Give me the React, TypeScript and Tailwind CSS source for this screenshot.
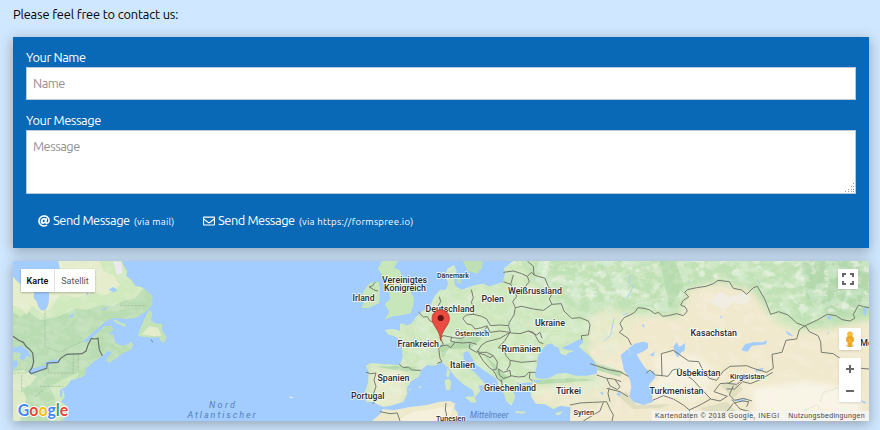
import React from "react";
import { FaAt, FaRegEnvelope } from "react-icons/fa";

type Label = { t: string; x: number; y: number; w: number; s?: number };

// Country labels, positioned on the map canvas
const labels: Label[] = [
  { t: "Vereinigtes", x: 382, y: 282.5, w: 45 },
  { t: "Königreich", x: 384, y: 291, w: 42 },
  { t: "Irland", x: 352.5, y: 300.5, w: 22 },
  { t: "Dänemark", x: 437, y: 277.5, w: 32, s: 7 },
  { t: "Deutschland", x: 425.5, y: 311.5, w: 49 },
  { t: "Polen", x: 481.5, y: 302, w: 22.5 },
  { t: "Weißrussland", x: 508, y: 294, w: 54 },
  { t: "Ukraine", x: 535, y: 325.5, w: 30 },
  { t: "Österreich", x: 455, y: 335.5, w: 34, s: 7 },
  { t: "Frankreich", x: 397.5, y: 347, w: 41.5 },
  { t: "Rumänien", x: 501.5, y: 352, w: 39.5 },
  { t: "Italien", x: 450, y: 368, w: 25 },
  { t: "Spanien", x: 377.5, y: 381, w: 32 },
  { t: "Portugal", x: 351, y: 399, w: 33.5 },
  { t: "Griechenland", x: 484, y: 391, w: 52 },
  { t: "Türkei", x: 556, y: 394, w: 25 },
  { t: "Syrien", x: 573.5, y: 414.5, w: 20.5, s: 7 },
  { t: "Tunesien", x: 436, y: 420.8, w: 29.5, s: 7 },
  { t: "Kasachstan", x: 690.5, y: 335.5, w: 46.5 },
  { t: "Usbekistan", x: 676.5, y: 375.5, w: 44 },
  { t: "Turkmenistan", x: 649.5, y: 394, w: 54 },
  { t: "Kirgisistan", x: 730, y: 378.5, w: 34.5, s: 7 },
  { t: "Mongolei", x: 860, y: 345.5, w: 38 },
];

const westLand =
  "M39 65L50 78L62 88V112L102 110L100 128L110 140L116 158L126 168L140 162L146 145L148 112L178 92L182 50L175 18H365L370 30L382 50L378 62L395 76L405 92L430 98L445 112L458 124L456 150L440 168L408 188L380 192L345 188L318 198L302 212L270 240L246 262L262 260L290 236L312 214L334 212L342 224L326 236L340 240L345 262L366 272L384 268L392 260L400 268L392 284L370 294L345 312L328 325L318 316L326 302L338 290L322 288L305 305L280 320L258 342L258 358L240 368L212 376L198 396L188 400L194 425L183 440L204 455L204 476L190 498H39Z";
const mainland =
  "M135 225L158 222L180 228V206L194 206L198 212L214 206L228 186L248 168L270 152L284 124L300 104L318 104L324 86L318 60L322 42L342 30L350 48L342 70L345 92L366 104L398 92L430 86L448 94L488 82L495 58L492 40L520 18H1587V498H690L692 456L660 452L640 462L615 448L588 446L574 426L570 402L578 382L548 384L530 382L538 394L512 392L526 426L514 452L498 438L492 416L476 398L470 372L438 350L410 330L394 306L384 288L370 294L372 322L394 344L414 362L436 386L430 392L416 390L420 408L404 430L398 406L370 388L346 366L326 340L306 322L284 332L262 330L242 346L238 364L212 380L200 400L202 418L190 440L160 450L130 456L112 448L100 440L78 442L74 414L84 382L86 350L78 332L92 324L140 328L180 330L188 306L186 280L186 258L164 244L144 238Z";

const roads = [
  "M530 90L556 120L550 180M620 105L642 170M740 120L780 170L775 240M780 60L800 170L850 100L900 70M780 170L850 210L870 300M850 180L880 150L970 130L1050 160M1010 300L1080 350M420 110L450 180L550 200M220 210L240 280L290 300M240 280L215 320M135 350L155 400L180 420M340 150L390 180M600 240L690 230L780 200M820 220L770 290L770 340",
];

const borders = [
  // Iberia and France
  "M78 352L92 356L108 354L102 375L108 395L100 418L104 440L98 446M178 328L190 338L205 336L215 345L242 346",
  "M236 172L250 186L262 185L270 198L300 210M298 125L302 140L294 154M300 246L310 268L296 280L300 310L306 320L292 325M300 274L320 270L332 278L345 262L370 264L390 262L410 268",
  "M300 246L312 242L325 245L335 246L332 258L345 262M335 248L365 250L382 240L405 232L430 232L442 214",
  // Central Europe
  "M394 104L400 128L394 142L402 160L400 178L380 180L368 190L380 206L395 210L405 222L425 218L442 212",
  "M400 178L425 184L440 192L452 212L480 210L506 212M442 214L450 232L480 228L510 232M390 265L388 280L410 292L425 270L440 260L480 250L510 232",
  "M410 292L418 288M415 292L440 292L460 302L450 308L435 300L415 294L430 318L450 340L458 344M460 302L472 320L470 342L458 345L466 356L472 370L485 380",
  "M476 342L490 352L510 346L512 364L490 370L478 360L476 342M512 362L535 366L555 364L566 352L586 352M484 374L488 398M570 352L568 370L578 378",
  "M510 232L495 256L475 278L492 282L498 302L510 316L510 330L500 346M510 316L545 322L590 318M506 214L512 234L540 236L565 228L580 232L598 262L610 266M565 228L590 240L600 232L606 250",
  // Eastern Europe
  "M490 52L520 48L545 56L562 64L575 52L582 60L580 34L562 18M490 80L512 88L524 108L530 124L518 140L526 158L522 180L508 202L506 212M520 60L512 88M562 64L568 80L548 104L524 108M582 60L615 70L625 95L638 112L628 132L636 148",
  "M526 158L545 154L580 162L610 166L636 148L664 146L672 168L695 190L720 188L745 198L750 210L745 240L724 242L726 255",
  // Caucasus, Turkey and the Levant
  "M750 326L780 336L810 345L840 350L865 364M770 360L800 370L820 372L844 380M800 370L810 392L832 404L840 395L825 374M690 450L720 444L760 442L800 440L810 462L820 480L816 498M810 440L804 415L808 398M730 498L780 468L790 442M800 400L840 410L864 425",
  // Kazakhstan
  "M874 270L864 250L838 232L848 222L840 205L852 188L870 180L884 172L894 158L912 160L928 164L944 176L956 172L968 184L985 182L1010 176L1030 182L1042 168L1036 156L1022 150L1030 136L1046 126L1034 112L1042 104L1070 98L1098 94L1120 86L1134 76L1168 80L1180 100L1205 105L1220 118L1240 98L1252 94L1274 132L1292 178L1316 170L1344 180L1370 204L1396 214",
  "M1396 212L1378 224L1370 252L1338 256L1326 292L1296 298L1300 340L1280 352L1240 340L1220 332L1170 334L1150 348L1130 376L1108 370L1090 348L1076 320L1046 318L1020 300L1000 286L964 296L966 362L946 360L930 345L918 355",
  "M966 362L984 364L998 345L1020 340L1038 360L1058 374L1086 404L1112 432M938 436L970 422L1000 432L1030 450L1048 465M1048 465L1080 450L1112 432L1140 438L1162 424L1122 410L1140 386L1166 384L1200 366M1180 392L1168 420L1184 436L1210 430L1236 438M1162 385L1190 388L1210 374M1160 402L1184 402L1208 380L1232 386L1260 374L1298 352M1176 434L1200 462L1230 470L1244 498M1048 465L1050 498M1180 445L1160 470L1110 498M1182 444L1208 438L1226 440L1220 455",
  // Mongolia
  "M1396 212L1430 196L1462 178L1488 182L1506 194L1530 198L1544 190L1540 178L1556 150L1570 155L1587 158M1396 212L1408 230L1434 242L1442 260L1444 292L1480 296L1500 310L1540 338L1587 342",
  // Africa and Ireland
  "M120 470L150 476L172 474L180 498M318 444L316 465L320 480L310 498M105 82L98 92L88 96L105 106L114 108",
];

function MapCanvas() {
  return (
    <svg className="block h-full w-full" viewBox="13 261 856 160" fontFamily="Roboto, sans-serif">
      <defs>
        <clipPath id="west">
          <path d={westLand} />
        </clipPath>
        <clipPath id="east">
          <path d={mainland} />
        </clipPath>
        <clipPath id="northAsia">
          <path d="M500 18H1587V150L1540 165L1480 178L1400 205L1330 175L1290 165L1250 90L1140 72L1110 88L1040 100L1020 150L1000 175L890 155L800 140L650 120Z" />
        </clipPath>
        <filter id="forest" x="0" y="0" width="100%" height="100%">
          <feTurbulence type="fractalNoise" baseFrequency="0.022 0.03" numOctaves="5" seed="8" />
          <feColorMatrix values="0 0 0 0 .71  0 0 0 0 .86  0 0 0 0 .69  7 0 0 0 -3.3" />
        </filter>
        <filter id="meadow" x="0" y="0" width="100%" height="100%">
          <feTurbulence type="fractalNoise" baseFrequency="0.03 0.04" numOctaves="5" seed="4" />
          <feColorMatrix values="0 0 0 0 .84  0 0 0 0 .92  0 0 0 0 .78  7 0 0 0 -3.9" />
        </filter>
        <filter id="steppe" x="0" y="0" width="100%" height="100%">
          <feTurbulence type="fractalNoise" baseFrequency="0.025 0.035" numOctaves="4" seed="21" />
          <feColorMatrix values="0 0 0 0 .96  0 0 0 0 .94  0 0 0 0 .84  0 7 0 0 -3.4" />
        </filter>
        <filter id="soft" x="-10%" y="-10%" width="120%" height="120%">
          <feGaussianBlur stdDeviation="10" />
        </filter>
      </defs>
      <rect x="13" y="261" width="856" height="160" fill="#a3ccff" />

      {/* North America */}
      <g transform="translate(0 255) scale(.33333)">
        <path d={westLand} fill="#b9dcb2" />
        <g clipPath="url(#west)">
          <path d="M39 60V172L60 185L85 170L120 195L148 190L170 185L200 175L230 160L260 165L300 150L340 152L370 138L405 130L430 100L365 18H170Z" fill="#d0e9bd" />
          <path d="M39 60V150L62 158L80 178L96 152L130 176L160 150L180 118L230 128L280 112L320 120L360 90L340 60L310 48L300 18H170Z" fill="#e5edcc" />
          <path d="M39 350L70 345L110 365L90 390L65 400L80 430L60 498H39Z" fill="#dceac5" />
          <path d="M150 395L185 375L240 350L220 385L190 400L205 440L180 498H150L168 440Z" fill="#cfe8bc" />
          <rect x="39" y="150" width="420" height="350" filter="url(#forest)" opacity=".2" />
          <rect x="39" y="18" width="420" height="480" filter="url(#steppe)" opacity=".14" />
          <path d="M340 18L364 22L368 55L350 60Z" fill="#eceaf0" />
          <g fill="#a3ccff">
            <path d="M39 278L62 272L82 284L92 305L80 302L70 318L58 310L64 294L39 292ZM82 348L100 340L140 330L136 342L94 360ZM130 325L155 314L180 314L176 324L140 330ZM39 318L50 315L54 330L39 345Z" />
            <path d="M326 104L340 96L352 106L342 112ZM205 188L218 176L224 170L218 186ZM258 120L262 112L266 118ZM300 165L325 155L315 164ZM180 405L188 398L186 430L180 422Z" />
          </g>
          <path d="M135 162V275L180 292L210 276L246 260M360 152H440M120 394H190M145 325V354H220V298M235 298V345M65 360V415M40 355L80 353M105 425L130 405" fill="none" stroke="#91ac95" strokeDasharray="8 3" strokeWidth="1.5" />
        </g>
        <path d="M448 164L458 174L452 196L470 206L488 206L485 224L500 246L492 264L480 256L478 246L460 248L414 244L420 222L430 200L440 178Z" fill="#c3e2b7" />
        <path d="M425 238L448 214L474 218L484 242L460 244Z" fill="#e3edcb" />
        <path d="M342 192L360 202L378 208L376 216L356 208L340 198ZM340 262L355 272L370 275L362 280L344 272Z" fill="#c8e5bb" />
        <path d="M39 244L56 256L70 262L78 274L90 284L98 294L101 320L96 338L88 350L94 356L116 348L140 340L142 324L174 322L182 310L200 298L246 296L258 288L264 270L274 250L284 252L294 250L298 284L307 302" fill="none" stroke="#64716a" strokeWidth="3.6" />
        <path d="M453 254L459 262" stroke="#50606c" strokeWidth="2" />
      </g>

      {/* Europe, Asia and North Africa */}
      <g transform="translate(340 255) scale(.33333)">
        <path d={mainland} fill="#cee7bd" />
        <path d="M125 18H174L162 38L180 46L186 72L204 98L222 128L220 152L212 174L188 180L160 184L134 194L148 170L134 148L150 132L148 106L132 92L136 72L114 42ZM90 84L116 80L120 105L118 144L88 158L64 160L70 144L60 132L72 106Z" fill="#c7e6ba" />
        <path d="M368 18H428L426 40L410 56L384 48ZM354 66L364 72L362 88L350 82Z" fill="#bfdfb4" />
        <g clipPath="url(#east)">
          <g filter="url(#soft)">
            <path d="M520 0H1600V260L1490 230L1400 215L1300 160L1150 85L1040 105L1010 180L880 160L790 220L630 120Z" fill="#c0e1b5" />
            <path d="M830 185L1020 185L1050 100L1140 82L1240 110L1290 190L1370 230L1490 215L1610 190V520H650L670 420L780 400L740 280L790 240Z" fill="#f1e9ce" />
            <path d="M740 190L800 160L890 180L850 270L750 270Z" fill="#e7eac9" />
            <path d="M90 345L200 345L190 450H95Z" fill="#e9ebcc" />
            <path d="M575 395L820 380V460H575Z" fill="#ebe9cb" />
            <path d="M1070 300L940 300L960 350L930 440L1080 430L1130 350Z" fill="#f5f0df" />
            <path d="M1230 400L1400 380L1560 400L1560 480L1250 480Z" fill="#f8f4e6" />
            <path d="M1370 15H1600V170L1480 170L1400 145Z" fill="#b2d8ac" />
          </g>
          <rect x="100" y="18" width="740" height="400" filter="url(#forest)" opacity=".4" />
          <g clipPath="url(#northAsia)">
            <rect x="500" y="18" width="1087" height="200" filter="url(#forest)" opacity=".5" />
            <rect x="500" y="18" width="1087" height="200" filter="url(#meadow)" opacity=".6" />
          </g>
          <path d="M960 18L1005 18L1032 90L990 160L976 100Z" fill="#b0d8aa" opacity=".75" />
          <path d="M345 255L395 240L425 250L395 280L325 282L308 310L300 280ZM735 285L770 325L850 350L840 365L770 345ZM580 376L680 370L770 375L690 382L590 388ZM180 332L230 338L200 350L110 335ZM435 300L475 340L505 370L485 380Z" fill="#a5d1a1" opacity=".65" />
          <rect x="75" y="18" width="1520" height="480" filter="url(#steppe)" opacity=".16" />
          <path d="M1140 110L1170 125L1210 112L1235 130L1215 150L1180 142L1150 165L1110 140Z" fill="#f0ede6" opacity=".8" />
          <path d="M830 420L860 410L890 450L990 448L960 460L880 462ZM1140 390L1175 380L1210 400L1180 430ZM1080 460L1160 440L1190 470L1130 490Z" fill="#d7d8ba" opacity=".7" />
        </g>
        <path d="M95 498L120 478L128 462L160 466L210 456L260 450L300 440L330 438L346 446L342 460L354 474L350 498Z" fill="#edeacc" />
        <path d="M170 498L220 470L300 458L336 455L330 498Z" fill="#f5f0db" />
        <path d="M314 374L328 372L334 382L330 406L318 404ZM322 340L330 348L326 368L318 362ZM374 426L402 424L410 440L396 444ZM525 468L560 470L550 476L528 474ZM646 474L668 468L660 480L648 480ZM234 396L246 392L242 400ZM206 404L212 400L210 408Z" fill="#d4e8bd" />
        <g fill="#a3ccff">
          <path d="M594 302L604 286L622 268L636 266L644 274L656 278L662 296L678 302L684 294L704 288L680 284L664 278L690 268L716 254L726 252L730 262L716 274L728 286L744 300L764 322L772 340L770 356L740 362L708 362L680 354L650 356L630 368L608 372L588 368L584 356L590 336Z" />
          <path d="M842 300L864 282L884 266L910 260L924 264L924 280L908 290L890 298L896 310L916 340L930 350L942 348L946 368L936 378L926 390L936 410L938 442L910 450L880 440L868 424L874 396L870 374L852 346Z" />
          <path d="M578 374L604 376L590 384ZM1000 275L1010 262L1018 276L1036 264L1034 286L1022 294L1014 308L1006 298ZM928 300L942 292L946 286L940 304ZM1204 286L1215 268L1240 262L1268 262L1282 256L1278 268L1236 272L1222 290ZM1246 344L1270 338L1268 348L1248 350ZM1336 226L1352 236L1360 244L1344 240ZM1462 182L1474 184L1472 194L1464 192ZM1570 160L1580 156L1578 184L1570 178ZM828 418L840 408L842 424ZM780 412L790 412L788 422ZM905 212L910 206L914 218ZM1140 184L1146 184L1144 192ZM580 72L584 70L584 78ZM1560 434L1580 442L1572 446ZM1170 435L1220 432L1210 440Z" />
        </g>
        <path d="M860 130L880 94L866 82L870 60M848 180L865 175M822 190L812 240L790 260M1050 78L1046 84M1260 84L1250 74M1460 238L1468 230" fill="none" stroke="#a9cfee" strokeWidth="3" />
        <path d={roads.join("")} fill="none" stroke="#edf3e0" strokeWidth="1.5" opacity=".65" />
        {borders.map((d, i) => (
          <path key={i} d={d} fill="none" stroke="#757b6f" strokeWidth="3" strokeLinejoin="round" />
        ))}
        <path d="M1440 440L1450 412L1500 396L1540 400M1280 490L1300 470L1360 480L1390 468L1430 450L1470 490" fill="none" stroke="#c4c3b2" strokeWidth="1.5" strokeDasharray="5 3" />
      </g>
      <path d="M289 397L293 397.6" stroke="#eff5e8" strokeWidth="1" />

      {labels.map((l) => (
        <text key={l.t} x={l.x} y={l.y} textLength={l.w} lengthAdjust="spacingAndGlyphs" fontSize={l.s ? l.s + 0.5 : 8.8} fontWeight="500" fill="#2c2c2c" stroke="#fff" strokeOpacity=".75" strokeWidth="1.8" strokeLinejoin="round" paintOrder="stroke">
          {l.t}
        </text>
      ))}
      <g fill="#5381bd" fontStyle="italic">
        <text x="209" y="408" fontSize="9" textLength="26">Nord</text>
        <text x="187.5" y="418.3" fontSize="9" textLength="68">Atlantischer</text>
        <text x="470" y="418.3" fontSize="8.2" textLength="38.5">Mittelmeer</text>
      </g>

      {/* Marker */}
      <path d="M440.7 340.5C439.8 329 432 326 432 318.3A8.7 8.7 0 0 1 449.4 318.3C449.4 326 441.6 329 440.7 340.5Z" fill="#ea4c42" stroke="#b53a32" strokeWidth=".8" />
      <circle cx="440.7" cy="318" r="3.1" fill="#621411" />

      <text x="17.8" y="415.6" fontFamily="'Product Sans', Lato, sans-serif" fontSize="17" fontWeight="700" textLength="50.5" lengthAdjust="spacingAndGlyphs" stroke="#fff" strokeWidth="2" paintOrder="stroke" strokeLinejoin="round">
        <tspan fill="#4285f4">G</tspan>
        <tspan fill="#ea4335">o</tspan>
        <tspan fill="#fbbc05">o</tspan>
        <tspan fill="#4285f4">g</tspan>
        <tspan fill="#34a853">l</tspan>
        <tspan fill="#ea4335">e</tspan>
      </text>
    </svg>
  );
}

function Pegman() {
  return (
    <svg className="h-[17px] w-[12px]" viewBox="0 0 12 17">
      <ellipse cx="6" cy="14.8" rx="4.3" ry="1.2" fill="#d3d3cf" />
      <path d="M3.8 5.6H8.2Q9.6 6 9.6 7.2V10.2L8.2 10.8L7.8 15.5H4.2L3.8 10.8L2.4 10.2V7.2Q2.4 6 3.8 5.6Z" fill="#fbb728" stroke="#d68c1a" strokeWidth=".5" />
      <path d="M4 6L6 7.5L8 6M6 11V15M4 7.5V10.5M8 7.5V10.5" fill="none" stroke="#ce7d18" strokeWidth=".6" />
      <circle cx="6" cy="3.2" r="2.5" fill="#fcc237" stroke="#db961e" strokeWidth=".5" />
    </svg>
  );
}

export default function App() {
  return (
    <main className="h-[430px] w-[880px] overflow-hidden bg-[#d0e8ff] pr-[11px] pl-[13px] font-['Ubuntu','Open_Sans',sans-serif] text-[12.8px] leading-[18px]">
      <p className="h-[37px] pt-[5px] tracking-[-0.15px] text-black">Please feel free to contact us:</p>
      <form className="h-[211px] bg-[#0969b6] px-[13px] pt-[11px] text-white shadow-[0_3px_12px_1px_rgba(0,0,0,0.28)]">
        <label className="block h-[63px]">
          <span className="block h-[19px] tracking-[-0.4px]">Your Name</span>
          <input placeholder="Name" className="block h-[33px] w-full border border-[#b9c9d9] bg-white px-[6px] pb-[2px] tracking-[-0.5px] text-black placeholder:text-[#919191]" />
        </label>
        <label className="block">
          <span className="block h-[19px] tracking-[-0.4px]">Your Message</span>
          <span className="relative block h-[64px]">
            <textarea placeholder="Message" className="block h-[64px] w-full resize-none border border-[#b9c9d9] bg-white px-[6px] py-[6px] tracking-[-0.5px] text-black placeholder:text-[#919191]" />
            <svg className="absolute right-[1px] bottom-[1px] h-[10px] w-[10px]" viewBox="0 0 10 10" fill="#9a9a9a">
              <path d="M8 0h1v1h-1zM6 3h1v1h-1zM8 3h1v1h-1zM3 6h1v1h-1zM6 6h1v1h-1zM8 6h1v1h-1zM0 8h1v1h-1zM3 8h1v1h-1zM6 8h1v1h-1zM8 8h1v1h-1z" />
            </svg>
          </span>
        </label>
        <div className="flex h-[54px] items-center pl-[12px]">
          <button type="button" className="flex w-[165px] items-center whitespace-nowrap">
            <FaAt className="mr-[3px] size-[12px]" />
            <span className="pb-[2px] tracking-[-0.42px]">Send Message</span>
            <small className="ml-[4px] pt-px text-[9.6px] tracking-[0.27px]">(via mail)</small>
          </button>
          <button type="button" className="flex items-center whitespace-nowrap">
            <FaRegEnvelope className="mr-[3px] size-[12px]" />
            <span className="pb-[2px] tracking-[-0.42px]">Send Message</span>
            <small className="ml-[4px] pt-px text-[9.6px] tracking-[0.27px]">(via https://formspree.io)</small>
          </button>
        </div>
      </form>
      <section className="relative mt-[13px] h-[160px] overflow-visible font-[Roboto,sans-serif] shadow-[0_3px_12px_1px_rgba(0,0,0,0.28)]">
        <MapCanvas />
        <div className="absolute top-[8px] left-[8px] flex h-[23px] items-center bg-white text-[9px] text-[#565656] shadow-[0_1px_2px_rgba(0,0,0,0.25)]">
          <button type="button" className="h-full w-[34px] border-r border-[#e3e3e3] font-medium text-black">Karte</button>
          <button type="button" className="h-full w-[40px]">Satellit</button>
        </div>
        <button type="button" className="absolute top-[8px] right-[11px] flex size-[20px] items-center justify-center bg-white shadow-sm">
          <svg className="size-[12px]" viewBox="0 0 12 12" fill="none" stroke="#666" strokeWidth="2">
            <path d="M4 1H1V4M8 1H11V4M1 8V11H4M11 8V11H8" />
          </svg>
        </button>
        <button type="button" className="absolute top-[67px] right-[8px] flex size-[22px] items-center justify-center rounded-[1px] bg-white shadow-sm">
          <Pegman />
        </button>
        <div className="absolute top-[97px] right-[8px] flex h-[44px] w-[22px] flex-col items-center justify-around rounded-[1px] bg-white shadow-sm">
          <svg className="size-[10px]" viewBox="0 0 10 10" stroke="#666" strokeWidth="2"><path d="M1 5H9M5 1V9" /></svg>
          <svg className="size-[10px]" viewBox="0 0 10 10" stroke="#666" strokeWidth="2"><path d="M1 5H9" /></svg>
        </div>
        <footer className="absolute right-0 bottom-0 flex h-[10px] w-[217px] items-center justify-between bg-[#f5f5f5]/75 pr-[4px] pl-[3px] font-['Liberation_Sans',sans-serif] text-[7px] leading-[10px] whitespace-nowrap text-[#444]">
          <span className="tracking-[0.45px]">Kartendaten © 2018 Google, INEGI</span>
          <span className="tracking-[0.35px]">Nutzungsbedingungen</span>
        </footer>
      </section>
    </main>
  );
}
